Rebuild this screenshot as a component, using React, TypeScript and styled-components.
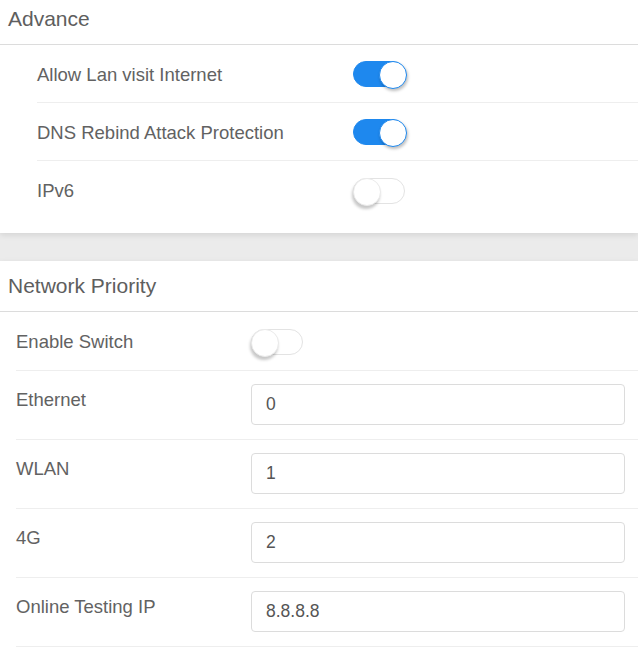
import styled, { createGlobalStyle } from "styled-components";

const GlobalStyle = createGlobalStyle`
  html, body {
    margin: 0;
    padding: 0;
    background: #ebebeb;
    font-family: "Liberation Sans", Arial, sans-serif;
    color: #5a5a5a;
  }
  * {
    box-sizing: border-box;
  }
`;

const Page = styled.div`
  display: flex;
  flex-direction: column;
  gap: 28px;
  margin-top: -6px;
`;

const Card = styled.section<{ bottom: number }>`
  background: #fff;
  box-shadow: 0 2px 6px rgba(0, 0, 0, 0.1);
  padding-bottom: ${(p) => p.bottom}px;
`;

const CardHeader = styled.div`
  height: 51px;
  line-height: 50px;
  padding-left: 8px;
  font-size: 21px;
  color: #5e5e5e;
  border-bottom: 1px solid #dcdcdc;
`;

const RowList = styled.div<{ indent: number }>`
  margin-left: ${(p) => p.indent}px;
`;

const Row = styled.div<{ height: number; labelWidth: number; top?: boolean }>`
  display: flex;
  align-items: ${(p) => (p.top ? "flex-start" : "center")};
  padding-top: ${(p) => (p.top ? 13 : 1)}px;
  height: ${(p) => p.height}px;
  border-bottom: 1px solid #eeeeee;
  &:last-child {
    border-bottom: ${(p) => (p.top ? "1px solid #eeeeee" : "none")};
  }
  & > label {
    width: ${(p) => p.labelWidth}px;
    flex: none;
  }
`;

const Label = styled.label`
  font-size: 18.5px;
  line-height: 31px;
  color: #626262;
`;

const Track = styled.span<{ on: boolean }>`
  position: relative;
  display: inline-block;
  width: 52px;
  height: 26px;
  border-radius: 13px;
  background: ${(p) => (p.on ? "#1e88ee" : "#fff")};
  border: 1px solid ${(p) => (p.on ? "#1e88ee" : "#e3e3e3")};
  &::after {
    content: "";
    position: absolute;
    top: -1px;
    left: ${(p) => (p.on ? "25px" : "-1px")};
    width: 26px;
    height: 26px;
    border-radius: 50%;
    background: #fff;
    border: 1px solid ${(p) => (p.on ? "#1e88ee" : "#eaeaea")};
    box-shadow: ${(p) =>
      p.on ? "1px 2px 3px rgba(0,0,0,0.25)" : "-1px 3px 3px rgba(0,0,0,0.22)"};
  }
`;

const Input = styled.input`
  flex: 1;
  margin-right: 13px;
  height: 41px;
  padding: 0 14px;
  border: 1px solid #dcdcdc;
  border-radius: 4px;
  font-family: "Liberation Sans", Arial, sans-serif;
  font-size: 17.5px;
  color: #555;
  outline: none;
  background: #fff;
`;

const advance = [
  { label: "Allow Lan visit Internet", on: true },
  { label: "DNS Rebind Attack Protection", on: true },
  { label: "IPv6", on: false },
];

const priorities = [
  { label: "Ethernet", value: "0" },
  { label: "WLAN", value: "1" },
  { label: "4G", value: "2" },
  { label: "Online Testing IP", value: "8.8.8.8" },
];

export default function App() {
  return (
    <>
      <GlobalStyle />
      <Page>
        <Card bottom={14}>
          <CardHeader>Advance</CardHeader>
          <RowList indent={37}>
            {advance.map((a) => (
              <Row key={a.label} height={58} labelWidth={316}>
                <Label>{a.label}</Label>
                <Track on={a.on} />
              </Row>
            ))}
          </RowList>
        </Card>
        <Card bottom={20}>
          <CardHeader>Network Priority</CardHeader>
          <RowList indent={16}>
            <Row height={59} labelWidth={235}>
              <Label>Enable Switch</Label>
              <Track on={false} />
            </Row>
            {priorities.map((p) => (
              <Row key={p.label} height={69} labelWidth={235} top>
                <Label>{p.label}</Label>
                <Input defaultValue={p.value} />
              </Row>
            ))}
          </RowList>
        </Card>
      </Page>
    </>
  );
}
